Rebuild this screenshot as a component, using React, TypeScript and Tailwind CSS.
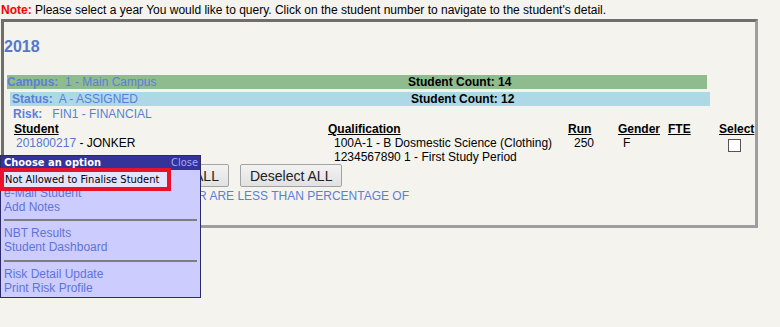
import React from "react";

const arial = { fontFamily: '"Liberation Sans", Arial, sans-serif' };

export default function App() {
  return (
    <div
      className="relative w-[780px] h-[327px] bg-[#f4f3ee] text-[12px] leading-[14px] text-black overflow-hidden"
      style={arial}
    >
      {/* Note line */}
      <div className="h-[19px] pt-[3px] pl-[1px] whitespace-nowrap">
        <span className="font-bold text-[#ff0000]">Note:</span> Please select a year You would like to query. Click on the student number to navigate to the student's detail.
      </div>

      {/* Main box */}
      <div className="ml-[1px] w-[757px] h-[209px] border-[3px] border-t-[#6e6e6b] border-l-[#6e6e6b] border-r-[#9e9e9e] border-b-[#9e9e9e]">
        <div className="pt-[15px] h-[34px] text-[16px] leading-[19px] font-bold text-[#5577cc]">2018</div>

        <div className="mt-[19px] ml-[3px] w-[700px] h-[14px] bg-[#8fbc8f] flex whitespace-nowrap">
          <div className="w-[401px] text-[#5b7fd6]">
            <span className="font-bold">Campus:</span>&nbsp; 1 - Main Campus
          </div>
          <div className="font-bold">Student Count: 14</div>
        </div>

        <div className="mt-[3px] ml-[6px] w-[700px] h-[14px] bg-[#add8e6] flex whitespace-nowrap">
          <div className="w-[401px] pl-[2px] text-[#5b7fd6]">
            <span className="font-bold">Status:</span>&nbsp; A - ASSIGNED
          </div>
          <div className="font-bold">Student Count: 12</div>
        </div>

        <div className="mt-[1px] ml-[9px] h-[14px] text-[#5b7fd6] whitespace-nowrap">
          <span className="font-bold">Risk:</span>&nbsp;&nbsp; FIN1 - FINANCIAL
        </div>

        {/* Table */}
        <div className="ml-[10px] grid grid-cols-[314px_240px_50px_50px_51px_40px] whitespace-nowrap">
          <div className="font-bold underline h-[15px] pt-[1px]">Student</div>
          <div className="font-bold underline pt-[1px]">Qualification</div>
          <div className="font-bold underline pt-[1px]">Run</div>
          <div className="font-bold underline pt-[1px]">Gender</div>
          <div className="font-bold underline pt-[1px]">FTE</div>
          <div className="font-bold underline pt-[1px]">Select</div>

          <div className="pl-[2px]">
            <span className="text-[#5577cc]">201800217</span> - JONKER
          </div>
          <div className="pl-[6px]">
            <div>100A-1 - B Dosmestic Science (Clothing)</div>
            <div>1234567890 1 - First Study Period</div>
          </div>
          <div className="pl-[6px]">250</div>
          <div className="pl-[5px]">F</div>
          <div></div>
          <div className="pl-[9px] pt-[3px]">
            <div className="w-[13px] h-[13px] border border-[#555] bg-white"></div>
          </div>
        </div>

        {/* Buttons */}
        <div className="ml-[138px] flex gap-[11px]">
          <button className="h-[23px] px-[9px] border border-[#a3a3a3] rounded-[2px] bg-gradient-to-b from-[#f3f3f3] to-[#e1e1e1] text-[14px] leading-[20px] text-[#222]">
            Select ALL
          </button>
          <button className="h-[23px] px-[9px] border border-[#a3a3a3] rounded-[2px] bg-gradient-to-b from-[#f3f3f3] to-[#e1e1e1] text-[14px] leading-[20px] text-[#222]">
            Deselect ALL
          </button>
        </div>

        <div className="mt-[2px] w-[405px] text-right whitespace-nowrap text-[#5b7fd6]">
          FOR THE YEAR ARE LESS THAN PERCENTAGE OF
        </div>
      </div>

      {/* Popup menu */}
      <div className="absolute left-0 top-[155px] w-[201px] h-[143px] border border-[#2a2a66] bg-[#ccccff]">
        <div
          className="h-[14px] bg-[#333399] flex justify-between items-center pl-[3px] pr-[2px] text-[11px] leading-[14px]"
          style={{ fontFamily: '"DejaVu Sans", Tahoma, sans-serif', fontStretch: "condensed" }}
        >
          <span className="font-bold text-white">Choose an option</span>
          <span className="text-[#a6a6ff]">Close</span>
        </div>
        <div className="pt-[2px] pl-[3px] text-[#5f74d8]">
          <div className="h-[14px]"></div>
          <div>e-Mail Student</div>
          <div>Add Notes</div>
          <div className="mt-[5px] mb-[5px] mr-[3px] border-t-[2px] border-[#7d7d7d]"></div>
          <div>NBT Results</div>
          <div>Student Dashboard</div>
          <div className="mt-[6px] mb-[5px] mr-[3px] border-t-[2px] border-[#7d7d7d]"></div>
          <div>Risk Detail Update</div>
          <div>Print Risk Profile</div>
        </div>

        {/* Highlighted item */}
        <div
          className="absolute -left-px top-[12px] w-[171px] h-[23px] border-[4px] border-[#e8132a] bg-[#e4e4ff] pl-[1px] text-[11px] leading-[15px] text-black whitespace-nowrap"
          style={{ fontFamily: '"DejaVu Sans", Tahoma, sans-serif', fontStretch: "condensed" }}
        >
          Not Allowed to Finalise Student
        </div>
      </div>
    </div>
  );
}
